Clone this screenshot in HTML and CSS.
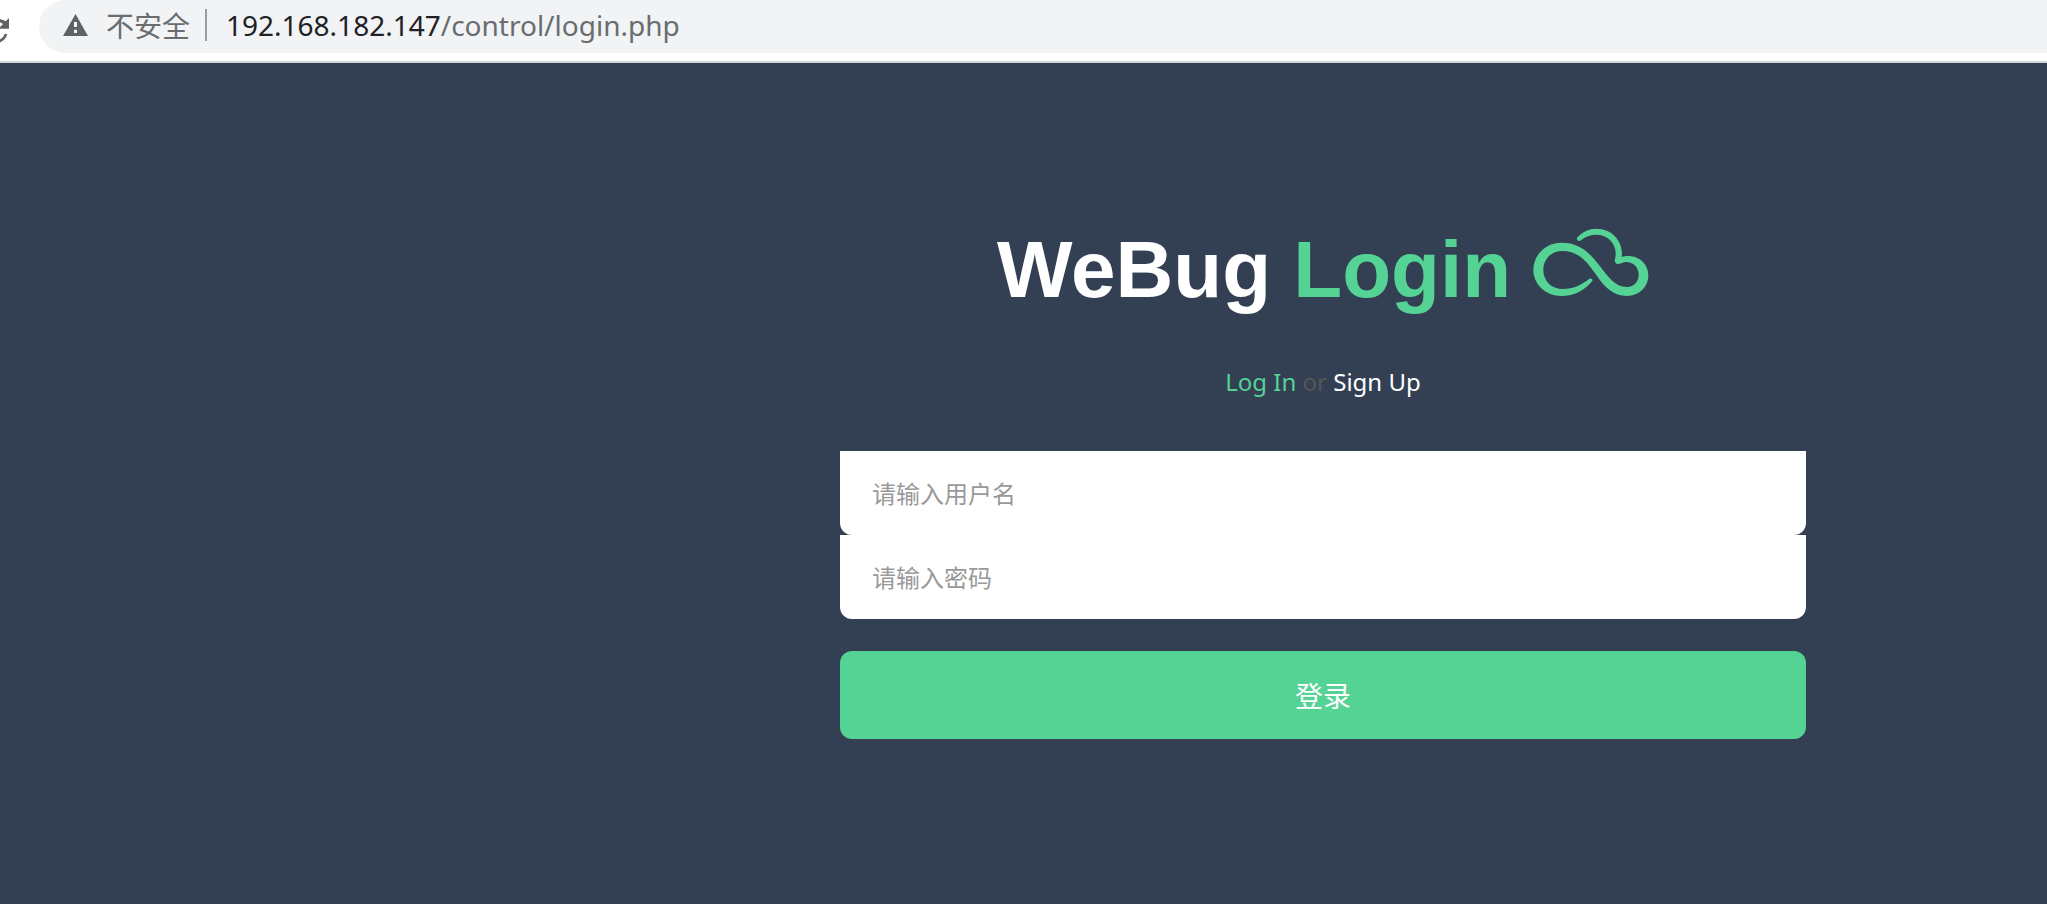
FILE: index.html
```html
<!DOCTYPE html>
<html lang="zh-CN">
<head>
<meta charset="utf-8">
<title>WeBug Login</title>
<link rel="stylesheet" href="styles.css">
</head>
<body>
<header class="toolbar">
  <button class="reload" type="button" aria-label="Reload">
    <svg viewBox="0 0 30 78" aria-hidden="true"><path d="M27 0V32H-5L9 18Q2 12 -8 12V2Q6 2 17 10Z" fill="#5f6368"/><path d="M18 48Q13 66 -6 71" fill="none" stroke="#5f6368" stroke-width="8"/></svg>
  </button>
  <div class="address">
    <svg class="warning" viewBox="0 0 75 66" aria-hidden="true"><path fill="#5f6368" fill-rule="evenodd" d="M37.500 0 75 66H0ZM33 24V39H42V24ZM33 47V57H42V47Z"/></svg>
    <span class="insecure">不安全</span>
    <span class="divider"></span>
    <span class="url"><span class="host">192.168.182.147</span>/control/login.php</span>
  </div>
</header>
<main class="page">
  <h1 class="title">
    <span>WeBug <span class="accent">Login</span></span>
    <svg class="cloud" viewBox="760 54 348 207" aria-hidden="true"><path fill="#55d394" d="M938 213C915 240 885 258 845 258C798 258 761 222 761 180C761 135 798 98 845 98C895 98 925 122 958 165C985 200 1005 231 1042 231C1064 231 1077 215 1077 193C1077 172 1060 156 1040 156C1030 156 1022 162 1015 162C1008 162 1005 157 1005 150C1007 145 1008 138 1008 130C1008 98 982 74 950 74C932 74 917 80 905 90C898 97 888 90 893 82C908 65 928 56 951 56C995 56 1027 90 1027 132L1026 141C1034 138 1039 138 1045 138C1080 138 1106 163 1106 196C1106 231 1078 258 1042 258C1000 258 975 232 950 195C925 160 900 123 848 123C815 123 791 147 791 180C791 213 815 237 850 237C882 237 905 225 928 207C934 203 940 208 938 213Z"/></svg>
  </h1>
  <p class="switch"><a class="accent" href="#login">Log In</a> or <a href="#signup">Sign Up</a></p>
  <form class="form" id="login">
    <input class="field" type="text" aria-label="用户名" placeholder="请输入用户名">
    <input class="field" type="password" aria-label="密码" placeholder="请输入密码">
    <button class="submit" type="submit">登录</button>
  </form>
</main>
</body>
</html>
```
FILE: styles.css
```css
* {
  box-sizing: border-box;
}

body {
  margin: 0;
  min-height: 100vh;
  display: flex;
  flex-direction: column;
  background: #333f53;
  font-family: "Noto Sans", "Noto Sans CJK SC", sans-serif;
}

.toolbar {
  display: flex;
  align-items: flex-start;
  height: 63px;
  background: #fff;
  border-bottom: 2px solid #d5d6d9;
}

.reload {
  width: 39px;
  height: 50px;
  padding: 12px 0 0;
  border: 0;
  background: none;
}

.reload svg {
  display: block;
  width: 10px;
  height: 26px;
}

.address {
  flex: 1;
  display: flex;
  align-items: center;
  height: 53px;
  padding: 0 0 4px 24px;
  background: #f1f3f4;
  border-radius: 27px 0 0 27px;
  color: #6a6d70;
  font-size: 28px;
}

.warning {
  width: 25px;
  height: 22px;
}

.insecure {
  margin-left: 18px;
}

.divider {
  width: 2px;
  height: 32px;
  margin: 0 19px 0 15px;
  background: #9b9ea1;
}

.host {
  color: #202124;
}

.page {
  flex: 1;
  display: flex;
  flex-direction: column;
  align-items: center;
  padding: 160px 0 40px 599px;
}

.title {
  display: flex;
  align-items: flex-start;
  gap: 22px;
  margin: 0;
  color: #fff;
  font: bold 80px/94px "Liberation Sans", Arial, sans-serif;
}

.accent,
.switch .accent {
  color: #55d394;
}

.cloud {
  width: 116px;
  height: 69px;
  margin-top: 5px;
}

.switch {
  margin: 47px 0 51px;
  color: #555;
  font-size: 24px;
  line-height: 36px;
}

.switch a {
  color: #fff;
  text-decoration: none;
}

.form {
  display: flex;
  flex-direction: column;
  width: 966px;
  max-width: 100%;
}

.field {
  height: 84px;
  padding: 0 32px;
  border: 0;
  border-radius: 0 0 12px 12px;
  background: #fff;
  color: #333;
  font: 24px "Noto Sans", "Noto Sans CJK SC", sans-serif;
}

.field::placeholder {
  color: #999;
}

.submit {
  height: 88px;
  margin-top: 32px;
  border: 0;
  border-radius: 12px;
  background: #55d394;
  color: #fff;
  font: 28px "Noto Sans", "Noto Sans CJK SC", sans-serif;
}
```
